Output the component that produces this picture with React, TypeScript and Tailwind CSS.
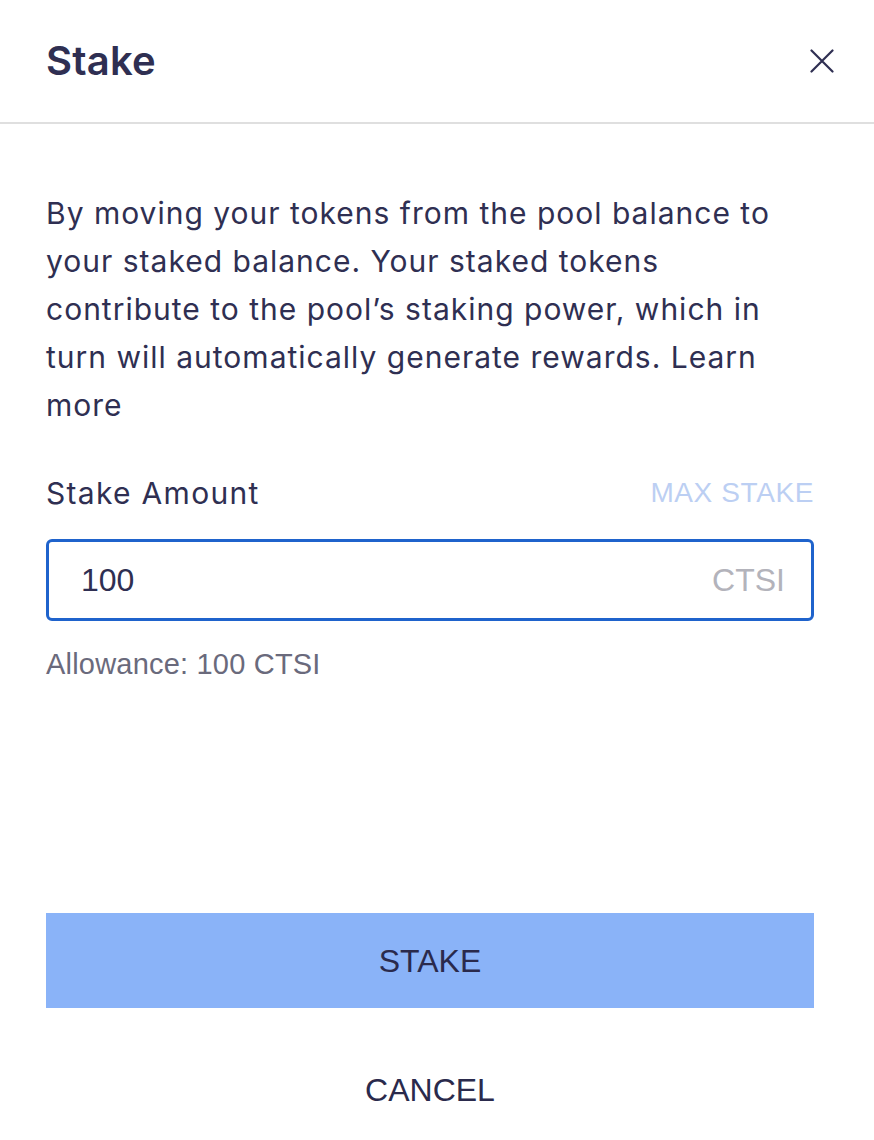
import { useState } from 'react';

export default function App() {
  const [amount, setAmount] = useState('100');

  return (
    <div className="min-h-[1140px] bg-white text-[#2f2f52] font-['Inter',sans-serif]">
      {/* Header */}
      <div className="flex h-[124px] items-center justify-between border-b-2 border-[#dfdfdf] pl-[46px] pr-[40px]">
        <h1 className="text-[40px] font-semibold tracking-[0.2px]">Stake</h1>
        <button className="text-[#2f2f52]" aria-label="Close">
          <svg width="24" height="24" viewBox="0 0 24 24" fill="none" stroke="currentColor" strokeWidth={2.2} strokeLinecap="round">
            <path d="M1.5 1.5L22.5 22.5M22.5 1.5L1.5 22.5" />
          </svg>
        </button>
      </div>

      <div className="pl-[46px] pr-[60px] pt-[65px]">
        <p className="text-[30px] leading-[48px] tracking-[1px]">
          By moving your tokens from the pool balance to your staked balance. Your staked tokens
          contribute to the pool’s staking power, which in turn will automatically generate rewards. Learn
          more
        </p>

        <div className="mt-[40px] flex h-[48px] items-center justify-between">
          <span className="text-[30px] tracking-[1.3px]">Stake Amount</span>
          <button className="font-['Liberation_Sans',sans-serif] text-[28px] tracking-[0.6px] text-[#bccff3]">MAX STAKE</button>
        </div>

        <div className="mt-[22px] flex h-[82px] items-center rounded-[6px] border-[3px] border-[#1f63cc] pl-[32px] pr-[26px] font-['Liberation_Sans',sans-serif]">
          <input
            value={amount}
            onChange={(e) => setAmount(e.target.value)}
            className="min-w-0 flex-1 bg-transparent text-[32px] text-[#2f2f52] outline-none"
          />
          <span className="text-[32px] text-[#b3b3bb]">CTSI</span>
        </div>

        <p className="mt-[23px] h-[40px] font-['Liberation_Sans',sans-serif] text-[29px] leading-[40px] tracking-[0.2px] text-[#6a6a7c]">
          Allowance: 100 CTSI
        </p>

        <button className="mt-[229px] flex h-[95px] w-full items-center justify-center bg-[#8ab3f8] font-['Liberation_Sans',sans-serif] text-[32px] text-[#2a2a4c]">
          STAKE
        </button>

        <button className="mt-[47px] flex h-[70px] w-full items-center justify-center font-['Liberation_Sans',sans-serif] text-[32px] text-[#2a2a4c]">
          CANCEL
        </button>
      </div>
    </div>
  );
}
